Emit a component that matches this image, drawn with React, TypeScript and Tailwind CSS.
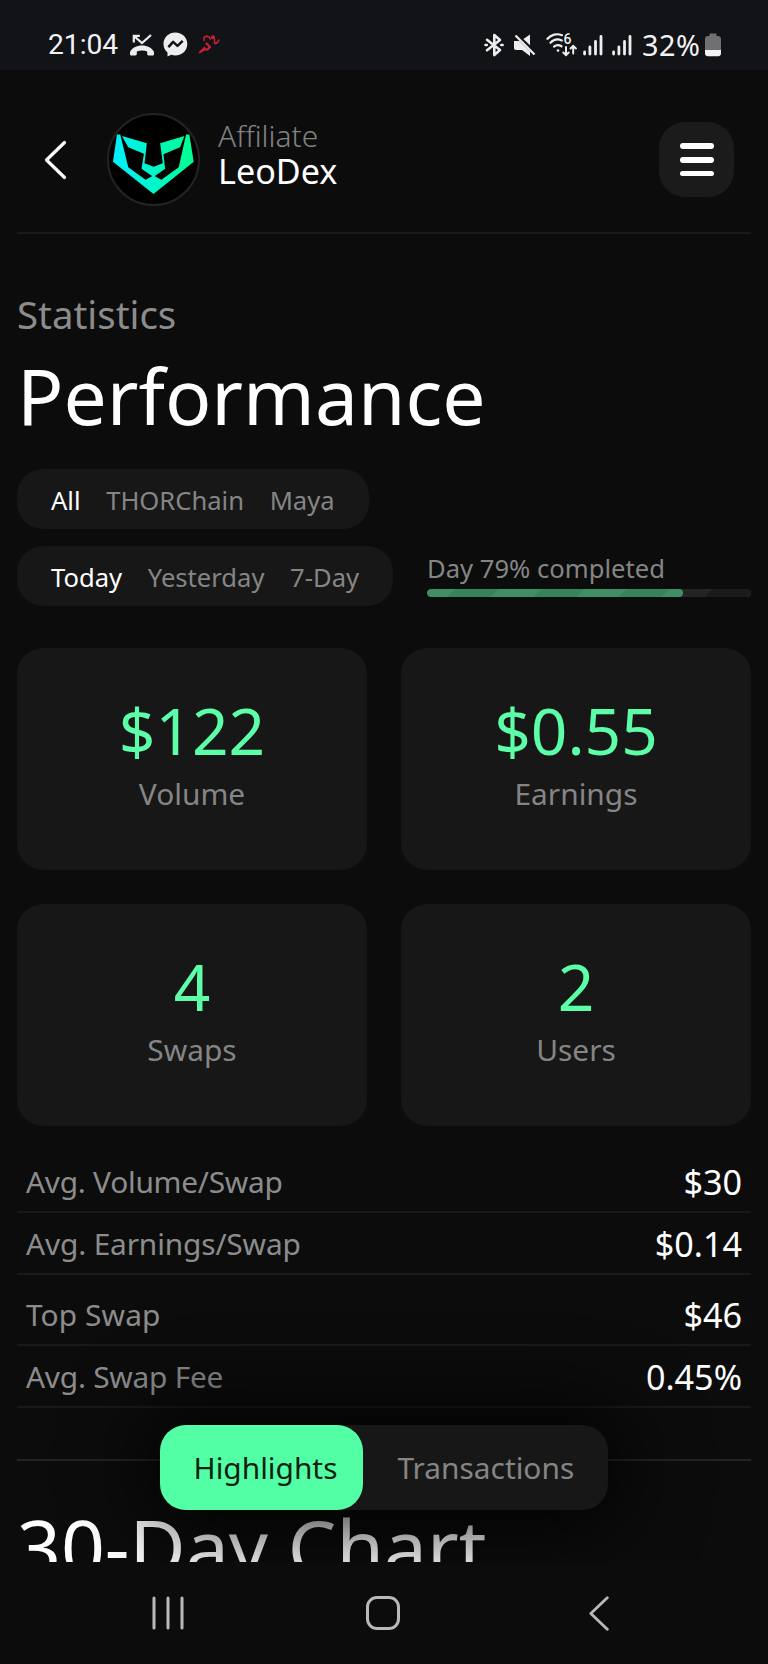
import { useState } from "react";

const STATS = [
    { label: "Volume", value: "$122" },
    { label: "Earnings", value: "$0.55" },
    { label: "Swaps", value: "4" },
    { label: "Users", value: "2" },
];

const AVERAGES = [
    { label: "Avg. Volume/Swap", value: "$30", tracking: "tracking-[-0.26px]" },
    { label: "Avg. Earnings/Swap", value: "$0.14", tracking: "tracking-[-0.15px]" },
];

const SWAPS = [
    { label: "Top Swap", value: "$46", tracking: "tracking-[0.1px]" },
    { label: "Avg. Swap Fee", value: "0.45%", tracking: "tracking-[-0.24px]" },
];

function SignalIcon({ className }: { className: string }) {
    return (
        <svg className={className} width="20" height="22" viewBox="0 0 20 22" stroke="#ededf0" strokeWidth="2.8" strokeLinecap="round">
            <path d="M1.6 18v2" />
            <path d="M6.9 13v7" />
            <path d="M12.5 7.5V20" />
            <path d="M18 2.5V20" />
        </svg>
    );
}

function StatusBar() {
    return (
        <div className="h-[70px] shrink-0 bg-[#121317] pt-[20px] pl-[48px] pr-[47px] flex items-center justify-between text-[#f2f2f5] leading-none">
            <div className="flex items-center">
                <span className="w-[70px] pt-px whitespace-nowrap font-['Roboto',sans-serif] text-[28.2px]">21:04</span>
                <svg className="ml-[12px]" width="24" height="24" viewBox="0 0 24 24" fill="none">
                    <path d="M3.8 9.5V2.8h6M4 3l8 7 9-8" stroke="#ededf0" strokeWidth="2.2" />
                    <path d="M0 21v-2c2-4.2 6.5-6.4 12-6.4S22 14.8 24 19v2c0 1-.6 1.5-1.4 1.5h-4c-.9 0-1.4-.6-1.4-1.4v-2.600c-3-1.4-7.400-1.4-10.400 0v2.600c0 .8-.5 1.400-1.400 1.400h-4C.6 22.5 0 22 0 21z" fill="#ededf0" />
                </svg>
                <svg className="ml-[9px]" width="25" height="25" viewBox="0 0 25 25">
                    <path d="M12.4.6C5.7.6.5 5.5.5 12.1c0 3.5 1.5 6.3 4 8.3v4.1l3.7-1.7c1.3.4 2.7.7 4.2.7 6.7 0 11.9-4.9 11.9-11.4S19.1.6 12.4.6z" fill="#ededf0" />
                    <path d="M5.4 15.2l4.7-5.3 4.400 4 5.200-5" fill="none" stroke="#121317" strokeWidth="2.5" strokeLinejoin="round" />
                </svg>
                <svg className="ml-[10px]" width="22" height="22" viewBox="0 0 22 22" fill="none" stroke="#cf2034" strokeWidth="1.5" strokeLinecap="round" strokeLinejoin="round">
                    <path d="M6 6.500V3.500l2.500-1.500L11 3l1.500 2M16.500 5v4.500c2 .3 3.500-1 4.500-3.500" />
                    <circle cx="15" cy="3.300" r="1.300" fill="#cf2034" />
                    <path d="M8.500 9.500l3.500 3.500-2.500 2.500H7" strokeWidth="2.200" />
                    <path d="M7.500 15l-6 3.500 5-5" strokeWidth="1.600" />
                </svg>
            </div>

            <div className="flex items-center">
                <svg width="20" height="24" viewBox="0 0 20 24" fill="none" stroke="#ededf0" strokeWidth="2.6" strokeLinejoin="round" strokeLinecap="round">
                    <path d="M3 6.8l13 10.2-5.7 5V2L16 7 3 17.2" />
                    <path d="M1.5 12h1.3M17.3 12h1.3" />
                </svg>
                <svg className="ml-[10px]" width="22" height="24" viewBox="0 0 22 24" fill="#ededf0">
                    <path d="M0 8h5.5L16 18.5V23L8 17H2c-1.2 0-2-.8-2-2V8z" />
                    <path d="M16 1.5v10.8L9.4 6z" />
                    <path d="M1.5 2.5l19 19" stroke="#ededf0" strokeWidth="2.3" />
                </svg>
                <svg className="ml-[10px]" width="32" height="25" viewBox="0 0 32 25" fill="none" stroke="#ededf0" strokeWidth="2.2" strokeLinecap="round">
                    <path d="M1.5 6.8C5 2.5 11 1.2 16 3.2" />
                    <path d="M4.5 10.8c3-3.2 7.5-4 11.3-2.3" />
                    <path d="M8 14.6c2.2-1.9 5-1.9 7.5-.3" />
                    <circle cx="12" cy="18.5" r="1.3" fill="#ededf0" stroke="none" />
                    <text x="17.5" y="12" fill="#ededf0" stroke="none" className="font-['Roboto',sans-serif] text-[14px] font-medium">6</text>
                    <path d="M20 15v8M17.3 20.5l2.7 2.7 2.7-2.7M27.2 21.5V14M24.5 16.5l2.7-2.7 2.7 2.7" strokeWidth="2" />
                </svg>
                <SignalIcon className="ml-[5px]" />
                <SignalIcon className="ml-[9px]" />
                <span className="ml-[10px] w-[58px] whitespace-nowrap font-['Noto_Sans',sans-serif] text-[28.8px] tracking-[0.5px]">32%</span>
                <svg className="ml-[5px]" width="16" height="24" viewBox="0 0 16 24">
                    <path d="M4.5 1.5c0-.6.5-1 1-1h5c.6 0 1 .4 1 1V3H13c1.7 0 3 1.3 3 3v11H0V6c0-1.7 1.3-3 3-3h1.5z" fill="#707073" />
                    <path d="M0 17h16v3.5c0 1.5-1.2 2.8-2.8 2.8H2.8C1.2 23.3 0 22 0 20.5z" fill="#f2f2f5" />
                </svg>
            </div>
        </div>
    );
}

function Avatar() {
    return (
        <svg className="ml-[40px]" width="93" height="93" viewBox="321 340 280 280">
            <defs>
                <linearGradient id="leo" gradientUnits="userSpaceOnUse" x1="339" y1="480" x2="582" y2="450">
                    <stop offset="0" stopColor="#00f0ff" />
                    <stop offset="1" stopColor="#00ff8c" />
                </linearGradient>
            </defs>
            <circle cx="461" cy="480" r="137" fill="#000" stroke="#232323" strokeWidth="6" />
            <g fill="url(#leo)">
                <path d="M351 405h10l24 98 52 38 24-13 24 13 52-38 22-98h10l13 82-121 97-122-97z" />
                <path d="M366 409l75 22-7 60 27 11 28-11-8-60 73-22-13 34-50 21 5 44-35 25-36-25 7-45-47-20z" />
            </g>
        </svg>
    );
}

function Header() {
    return (
        <header className="mx-[17px] h-[164px] pt-[17.5px] pl-[27px] pr-[17px] border-b-2 border-[#1a1a1a] flex items-center">
            <svg width="23" height="40" viewBox="0 0 23 40" fill="none" stroke="#fff" strokeWidth="3.2" strokeLinecap="round" strokeLinejoin="round">
                <path d="M20.5 2.5L2.5 20l18 17.5" />
            </svg>
            <Avatar />
            <div className="ml-[18px] pb-[11px] flex flex-col">
                <span className="text-[29.87px] leading-[34px] font-light text-[#828282]">Affiliate</span>
                <span className="text-[34.13px] leading-[36px] text-white">LeoDex</span>
            </div>
            <button className="ml-auto size-[75px] rounded-[26px] bg-[#1b1b1b] flex flex-col items-center justify-center gap-2">
                <span className="w-[34px] h-[5.7px] rounded-full bg-white" />
                <span className="w-[34px] h-[5.7px] rounded-full bg-white" />
                <span className="w-[34px] h-[5.7px] rounded-full bg-white" />
            </button>
        </header>
    );
}

function Tabs({ items }: { items: string[] }) {
    const [active, setActive] = useState<string>(items[0]);

    return (
        <div className="h-[59.73px] pt-[3px] px-[34px] rounded-[26px] bg-[#171717] flex items-center gap-[25.6px] text-[25.6px] leading-none">
            {items.map((item) => (
                <button key={item} className={item === active ? "text-white" : "text-[#858585]"} onClick={() => setActive(item)}>{item}</button>
            ))}
        </div>
    );
}

function DayProgress({ percent }: { percent: number }) {
    return (
        <div className="flex-1 pb-[1.5px]">
            <p className="text-[25.6px] leading-[32px] text-[#858585]">Day {percent}% completed</p>
            <div className="mt-[4px] h-[8.5px] rounded-full overflow-hidden bg-[repeating-linear-gradient(135deg,#242424_0_20.5px,#1b1b1b_20.5px_50.7px,#242424_50.7px_60.4px)]">
                <div className="h-full rounded-full bg-[repeating-linear-gradient(135deg,#3e8f66_0_20.5px,#37835b_20.5px_50.7px,#3e8f66_50.7px_60.4px)]" style={{ width: `${percent}%` }} />
            </div>
        </div>
    );
}

function Row({ label, value, tracking }: { label: string; value: string; tracking: string }) {
    return (
        <div className="h-[62px] pt-[2px] px-[9px] border-b-2 border-[#191919] flex items-center justify-between leading-[40px]">
            <span className={`text-[29.87px] text-[#8c8c8c] ${tracking}`}>{label}</span>
            <span className="text-[34.13px] text-white">{value}</span>
        </div>
    );
}

function BottomSwitch() {
    const [tab, setTab] = useState<string>("Highlights");

    return (
        <div className="absolute bottom-[51.5px] left-[159.5px] h-[85.5px] rounded-[26px] bg-[#171717] shadow-[0_0_85px_10px_#000] flex text-[29.87px]">
            {["Highlights", "Transactions"].map((item) => (
                <button key={item} className={item === tab ? "pt-[2px] pl-[34px] pr-[26px] rounded-[26px] bg-[#53ffa5] text-[#0c1f12]" : "pt-[2px] px-[34px] rounded-[26px] text-[#858585]"} onClick={() => setTab(item)}>{item}</button>
            ))}
        </div>
    );
}

function NavBar() {
    return (
        <nav className="flex-1 bg-[#0c0c0c] pt-[34px] pl-[152px] flex items-start">
            <svg width="32" height="34" viewBox="0 0 32 34" stroke="#b9b9b9" strokeWidth="3" strokeLinecap="round">
                <path d="M2 2v30M16 2v30M30 2v30" />
            </svg>
            <svg className="ml-[182px]" width="34" height="34" viewBox="0 0 34 34" fill="none" stroke="#b9b9b9" strokeWidth="3">
                <rect x="1.5" y="1.5" width="31" height="31" rx="9.5" />
            </svg>
            <svg className="ml-[189px]" width="20" height="35" viewBox="0 0 20 35" fill="none" stroke="#b9b9b9" strokeWidth="2.8" strokeLinecap="round" strokeLinejoin="round">
                <path d="M18.3 1.8L1.8 17.5l16.5 15.7" />
            </svg>
        </nav>
    );
}

function App() {
    return (
        <div className="w-[768px] h-[1664px] bg-[#0c0c0c] overflow-hidden flex flex-col font-['Noto_Sans',sans-serif]">
            <StatusBar />

            <div className="relative h-[1491.5px] shrink-0 overflow-hidden">
                <Header />

                <main className="px-[17px] pt-[55.5px]">
                    <p className="text-[38.4px] leading-[48px] text-[#8c8c8c]">Statistics</p>
                    <h1 className="mt-[13px] text-[76.8px] leading-[90px] text-white">Performance</h1>

                    <div className="mt-[28.8px] flex">
                        <Tabs items={["All", "THORChain", "Maya"]} />
                    </div>
                    <div className="mt-[17px] flex items-center gap-[34px]">
                        <Tabs items={["Today", "Yesterday", "7-Day"]} />
                        <DayProgress percent={79} />
                    </div>

                    <div className="mt-[42.7px] grid grid-cols-2 gap-[34px]">
                        {STATS.map((stat) => (
                            <div key={stat.label} className="h-[222px] pt-[47px] rounded-[26px] bg-[#171717] flex flex-col items-center">
                                <span className="text-[64px] leading-[72px] text-[#5cffa8]">{stat.value}</span>
                                <span className="mt-[7px] text-[29.87px] leading-[40px] text-[#858585]">{stat.label}</span>
                            </div>
                        ))}
                    </div>

                    <div className="mt-[25px]">
                        {AVERAGES.map((row) => <Row key={row.label} {...row} />)}
                    </div>
                    <div className="mt-[8.5px]">
                        {SWAPS.map((row) => <Row key={row.label} {...row} />)}
                    </div>

                    <div className="mt-[51px] border-t-2 border-[#242424]" />
                    <h2 className="mt-[41px] text-[76.8px] leading-[90px] text-white">30-Day Chart</h2>
                </main>

                <BottomSwitch />
            </div>

            <NavBar />
        </div>
    );
}

export default App;
